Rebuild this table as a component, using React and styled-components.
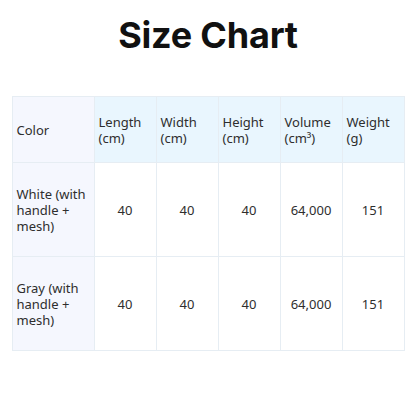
import styled, { createGlobalStyle } from "styled-components";

const GlobalStyle = createGlobalStyle`
body {
  margin: 0;
  background: #ffffff;
  font-family: "Noto Sans", "Open Sans", sans-serif;
}
`;

const Page = styled.div`
width: 416px;
height: 416px;
display: flex;
flex-direction: column;
align-items: center;
background: #ffffff;
`;

const Title = styled.h1`
margin: 15px 0 0 0;
height: 81px;
font-family: Inter, "Liberation Sans", sans-serif;
font-weight: 700;
font-size: 36px;
line-height: 40px;
letter-spacing: -0.2px;
color: #111111;
`;

const Table = styled.table`
width: 392px;
border-collapse: collapse;
table-layout: fixed;
color: #2e2e2e;
font-size: 13px;
line-height: 16px;
`;

const Cell = styled.td`
border: 1px solid #e6edf3;
padding: 0 4px;
height: ${props => props.h || 93}px;
text-align: ${props => props.align || "center"};
vertical-align: middle;
background: ${props => props.bg || "#ffffff"};
`;

const HeadCell = styled(Cell).attrs({ as: "th" })`
font-weight: 400;
text-align: left;
`;

const columns = [
  { label: "Color", w: 82 },
  { label: "Length\n(cm)", w: 62 },
  { label: "Width\n(cm)", w: 62 },
  { label: "Height\n(cm)", w: 62 },
  { label: "Volume\n(cm³)", w: 62 },
  { label: "Weight\n(g)", w: 62 },
];

const rows = [
  { name: "White (with handle + mesh)", values: ["40", "40", "40", "64,000", "151"] },
  { name: "Gray (with handle + mesh)", values: ["40", "40", "40", "64,000", "151"] },
];

const Label = styled.span`
white-space: pre-line;
`;

export default function App() {
  return (
    <Page>
      <GlobalStyle />
      <Title>Size Chart</Title>
      <Table>
        <colgroup>
          {columns.map((c, i) => <col key={i} style={{ width: c.w }} />)}
        </colgroup>
        <thead>
          <tr>
            {columns.map((c, i) => (
              <HeadCell key={i} h={65} bg={i === 0 ? "#f5f7fe" : "#e9f6fe"}>
                <Label>{c.label}</Label>
              </HeadCell>
            ))}
          </tr>
        </thead>
        <tbody>
          {rows.map((r, i) => (
            <tr key={i}>
              <Cell align="left" bg="#f5f7fe">{r.name}</Cell>
              {r.values.map((v, j) => <Cell key={j}>{v}</Cell>)}
            </tr>
          ))}
        </tbody>
      </Table>
    </Page>
  );
}
